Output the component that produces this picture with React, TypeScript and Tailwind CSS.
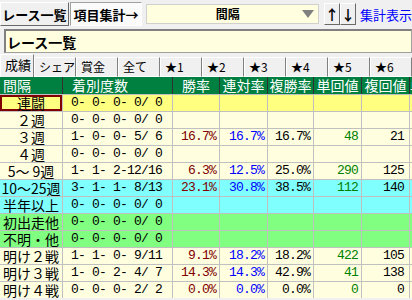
import React from 'react';

const jp = { fontFamily: '"Noto Sans CJK JP", sans-serif' };
const mono = { fontFamily: '"Liberation Mono", "Noto Sans CJK JP", monospace' };

const cols = 'grid grid-cols-[62px_109px_46px_47px_45px_47px_47px_1fr] gap-px';

const tabs = ['シェア', '賞金', '全て', '★1', '★2', '★3', '★4', '★5', '★6'];

const heads = ['勝率', '連対率', '複勝率', '単回値', '複回値'];

type Row = {
  label: string;
  rec: string;
  bg: string;
  vals?: string[];
  sel?: boolean;
};

const rows: Row[] = [
  { label: '連闘', rec: '0- 0- 0- 0/ 0', bg: 'bg-[#ffff80]', sel: true },
  { label: '２週', rec: '0- 0- 0- 0/ 0', bg: 'bg-[#ffffe0]' },
  { label: '３週', rec: '1- 0- 0- 5/ 6', bg: 'bg-[#ffffe0]', vals: ['16.7%', '16.7%', '16.7%', '48', '21'] },
  { label: '４週', rec: '0- 0- 0- 0/ 0', bg: 'bg-[#ffffe0]' },
  { label: '5～ 9週', rec: '1- 1- 2-12/16', bg: 'bg-[#ffffe0]', vals: ['6.3%', '12.5%', '25.0%', '290', '125'] },
  { label: '10～25週', rec: '3- 1- 1- 8/13', bg: 'bg-[#80ffff]', vals: ['23.1%', '30.8%', '38.5%', '112', '140'] },
  { label: '半年以上', rec: '0- 0- 0- 0/ 0', bg: 'bg-[#80ffff]' },
  { label: '初出走他', rec: '0- 0- 0- 0/ 0', bg: 'bg-[#80ff80]' },
  { label: '不明・他', rec: '0- 0- 0- 0/ 0', bg: 'bg-[#80ff80]' },
  { label: '明け２戦', rec: '1- 1- 0- 9/11', bg: 'bg-[#ffffe0]', vals: ['9.1%', '18.2%', '18.2%', '422', '105'] },
  { label: '明け３戦', rec: '1- 0- 2- 4/ 7', bg: 'bg-[#ffffe0]', vals: ['14.3%', '14.3%', '42.9%', '41', '138'] },
  { label: '明け４戦', rec: '0- 0- 0- 2/ 2', bg: 'bg-[#ffffe0]', vals: ['0.0%', '0.0%', '0.0%', '0', '0'] },
];

// colour of each value column
const valColors = ['text-[#800000]', 'text-[#0000ff]', 'text-black', 'text-[#008000]', 'text-black'];

export default function App() {
  return (
    <div className="w-[412px] h-[300px] overflow-hidden bg-[#f0f0f0] text-black" style={jp}>
      {/* top bar */}
      <div className="flex items-center h-[28px]">
        <button className="w-[74px] h-[24px] bg-[#f0f0f0] border border-t-white border-l-white border-r-[#696969] border-b-[#696969] text-[13px] font-bold leading-none">
          レース一覧
        </button>
        <button className="ml-px w-[78px] h-[24px] bg-[#fbfbfb] border border-t-[#a0a0a0] border-l-[#a0a0a0] border-r-white border-b-white text-[13px] font-bold leading-none">
          項目集計→
        </button>
        <div className="ml-[4px] w-[186px] h-[20px] bg-[#ffffe0] border border-[#d0d0d0] flex items-center">
          <span className="flex-1 text-center pl-[6px] text-[12px] font-bold leading-none">間隔</span>
          <span className="w-0 h-0 mr-[4px] border-l-[6px] border-r-[6px] border-t-[8px] border-l-transparent border-r-transparent border-t-[#808080]" />
        </div>
        <button className="ml-[5px] w-[16px] h-[22px] bg-[#f0f0f0] border border-t-white border-l-white border-r-[#696969] border-b-[#696969] text-[14px] font-bold leading-none">
          ↑
        </button>
        <button className="w-[16px] h-[22px] bg-[#f0f0f0] border border-t-white border-l-white border-r-[#696969] border-b-[#696969] text-[14px] font-bold leading-none">
          ↓
        </button>
        <span className="ml-[4px] text-[13px] text-[#0000ff] whitespace-nowrap leading-none">集計表示</span>
      </div>

      {/* title box */}
      <div className="mt-px ml-[4px] h-[24px] bg-[#ffffe0] border border-[#a0a0a0] border-t-2 border-t-[#808080] border-l-2 border-l-[#808080] flex items-center pl-[1px]">
        <span className="text-[14px] font-bold leading-none">レース一覧</span>
      </div>

      {/* tabs */}
      <div className="flex items-end h-[24px]">
        <div className="w-[42px] h-[23px] border-t border-l border-t-white border-l-white border-r border-r-[#808080] pl-[4px] text-[13px] leading-[20px]">
          成績
        </div>
        {tabs.map((t) => (
          <div
            key={t}
            className="shrink-0 w-[42px] h-[20px] border-t border-l border-b border-t-white border-l-white border-b-white border-r border-r-[#808080] pl-[4px] text-[12px] leading-[18px]"
          >
            {t}
          </div>
        ))}
      </div>

      {/* grid */}
      <div className="flex flex-col gap-px bg-[#c0c0c0]">
        <div className={`${cols} bg-[#303030] h-[17px] text-white text-[14px] leading-[17px]`}>
          <div className="bg-[#008040] pl-[3px]">間隔</div>
          <div className="bg-[#008040] pl-[9px]">着別度数</div>
          {heads.map((h) => (
            <div key={h} className="bg-[#008040] text-center whitespace-nowrap">
              {h}
            </div>
          ))}
          <div className="bg-[#008040] whitespace-nowrap overflow-hidden">単勝</div>
        </div>

        {rows.map((r) => (
          <div key={r.label} className={`${cols} h-[16px] leading-[16px]`}>
            {r.sel ? (
              <div className="bg-[#ffff80] border-2 border-[#800000] text-center text-[14px] leading-[12px] whitespace-nowrap">
                {r.label}
              </div>
            ) : (
              <div className={`${r.bg} text-center text-[14px] whitespace-nowrap`}>{r.label}</div>
            )}
            <div className={`${r.bg} pl-[8px] text-[13px] tracking-[-0.8px] whitespace-pre`} style={mono}>
              {r.rec}
            </div>
            {valColors.map((c, i) => (
              <div
                key={i}
                className={`${r.bg} ${c} text-right ${i === 4 ? 'pr-[5px]' : 'pr-[3px]'} text-[13px] tracking-[-0.8px] whitespace-pre`}
                style={mono}
              >
                {r.vals ? r.vals[i] : ''}
              </div>
            ))}
            <div className={r.bg} />
          </div>
        ))}
      </div>
    </div>
  );
}
